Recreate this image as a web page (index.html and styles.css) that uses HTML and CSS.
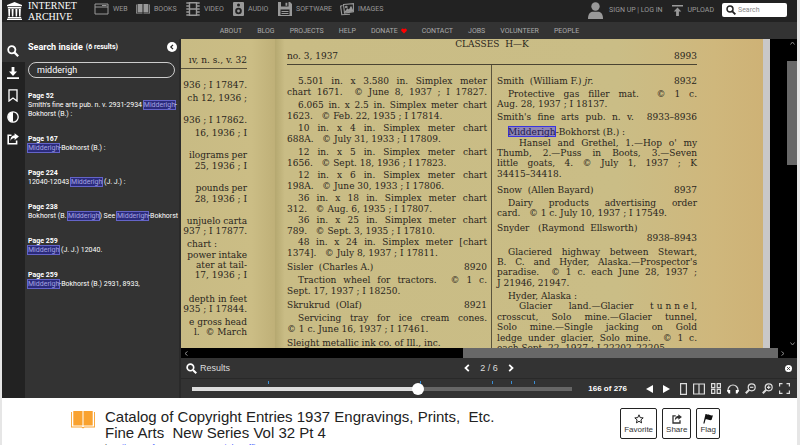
FILE: index.html
```html
<!DOCTYPE html>
<html lang="en">
<head>
<meta charset="utf-8">
<title>Catalog of Copyright Entries 1937</title>
<link rel="stylesheet" href="styles.css">
</head>
<body>
<svg class="defs" aria-hidden="true">
  <symbol id="i-search" viewBox="0 0 12 12"><circle cx="4.8" cy="4.8" r="3.6" fill="none" stroke="currentColor" stroke-width="1.8"/><path d="M7.6 7.6 11.2 11.2" stroke="currentColor" stroke-width="2.2"/></symbol>
  <symbol id="i-share" viewBox="0 0 12 12"><path d="M4.5 2.2H1.2v8.6h8.4V7.6" fill="none" stroke="currentColor" stroke-width="1.6"/><path d="M7.6.3 11.9 3.6 7.6 7V5C5.600 5 4.500 5.700 3.400 8 3.400 4.500 4.600 2.400 7.600 2.200Z" fill="currentColor"/></symbol>
</svg>
<div class="app">
  <header>
    <div class="topbar">
      <a class="logo" href="#">
        <svg width="15" height="18" viewBox="0 0 15 18" fill="#fff"><path d="M7.500 0 15 3v1.200H0V3ZM.8 5h13.400v1.400H.8ZM1.200 7h2l-.3 7.600H1.500ZM4.600 7h2l-.3 7.600H4.900ZM8.400 7h2l-.3 7.600H8.700ZM11.800 7h2l-.3 7.600h-1.400ZM.8 15h13.400v1.200H.8ZM0 16.800h15V18H0Z"/></svg>
        <span>INTERNET<br>ARCHIVE</span>
      </a>
      <nav class="media">
        <a href="#"><svg width="15" height="12" viewBox="0 0 15 12" fill="none" stroke="#999"><path d="M1 1h13v10H1ZM1 4h13M8 2.500h4.500"/></svg>WEB</a>
        <a href="#"><svg width="14" height="12" viewBox="0 0 14 12" fill="#999"><path d="M0 1.500h.8v8.300h5.700v.8H0ZM14 1.500h-.8v8.300H7.500v.8H14ZM1.600 1h4.900v8.200H1.600ZM7.500 1h4.900v8.200H7.500Z"/></svg>BOOKS</a>
        <a href="#"><svg width="14" height="14" viewBox="0 0 14 14" fill="none" stroke="#999" stroke-width="1.400"><path d="M3.500.7h7v12.600h-7ZM3.500 7h7M.3 1h2.500M.3 4h2.500M.3 7h2.500M.3 10h2.500M.3 13h2.500M11.200 1h2.500M11.200 4h2.500M11.200 7h2.500M11.200 10h2.500M11.200 13h2.500"/></svg>VIDEO</a>
        <a href="#"><svg width="11" height="14" viewBox="0 0 11 14"><rect width="11" height="14" rx="1" fill="#999"/><circle cx="5.500" cy="3" r="1.500" fill="#222"/><circle cx="5.500" cy="9" r="3.300" fill="#222"/><circle cx="5.500" cy="9" r="1.400" fill="#999"/></svg>AUDIO</a>
        <a href="#"><svg width="14" height="14" viewBox="0 0 14 14"><path d="M0 0h12l2 2v12H0Z" fill="#999"/><path d="M3 0h7.500v4.500H3ZM2.500 7.500h9V13h-9Z" fill="#222"/><path d="M7.500.8h1.800v3H7.500ZM3.500 9h7v1h-7ZM3.500 11h7v1h-7Z" fill="#999"/></svg>SOFTWARE</a>
        <a href="#"><svg width="14" height="13" viewBox="0 0 14 13" fill="none" stroke="#999" stroke-width="1.100"><path d="M2.500 2.500.6 3.200 1.800 11.700 10 11.200M3.500 1.500 13.400.7V8.700L4.500 10Z"/><circle cx="6.300" cy="4" r=".8"/><path d="m5 9 2.500-3 1.500 1.500L11 4l1.800 4Z" fill="#999"/></svg>IMAGES</a>
      </nav>
      <div class="account">
        <svg width="15" height="17" viewBox="0 0 15 17" fill="#999"><circle cx="7.500" cy="4.500" r="4.200"/><path d="M0 17c0-5 2-7.300 5-7.300h5c3 0 5 2.300 5 7.300Z"/></svg>
        <span><a href="#">SIGN UP</a> | <a href="#">LOG IN</a></span>
        <a class="upload" href="#"><svg width="11" height="11" viewBox="0 0 11 11" fill="#999"><path d="M0 0h11v1.600H0ZM5.500 2.500 9.300 6.500H6.900V11H4.100V6.500H1.700Z"/></svg>UPLOAD</a>
        <label class="find"><svg width="10" height="10"><use href="#i-search"/></svg><input type="text" placeholder="Search" aria-label="Search"></label>
      </div>
    </div>
    <nav class="links">
      <a href="#">ABOUT</a><a href="#">BLOG</a><a href="#">PROJECTS</a><a href="#">HELP</a><a href="#">DONATE<svg width="6" height="6" viewBox="0 0 7 6"><path d="M3.500 6 .5 3C-.6 1.300 1.700-1 3.500 1 5.300-1 7.600 1.300 6.500 3Z" fill="#f00"/></svg></a><a href="#">CONTACT</a><a href="#">JOBS</a><a href="#">VOLUNTEER</a><a href="#">PEOPLE</a>
    </nav>
  </header>

  <main class="reader">
    <div class="rail">
      <button class="on" aria-label="Search inside"><svg width="12" height="12"><use href="#i-search"/></svg></button>
      <button aria-label="Download"><svg width="12" height="12" viewBox="0 0 12 12" fill="#fff"><path d="M4.600 0h2.800v4.500H10L6 9 2 4.500h2.600ZM0 10.300h12V12H0Z"/></svg></button>
      <button aria-label="Bookmarks"><svg width="10" height="13" viewBox="0 0 10 13" fill="none" stroke="#fff" stroke-width="1.300"><path d="M1 .8h8v11.200L5 9 1 12Z"/></svg></button>
      <button aria-label="Visual adjustments"><svg width="12" height="12" viewBox="0 0 12 12"><circle cx="6" cy="6" r="5.200" fill="none" stroke="#fff" stroke-width="1.300"/><path d="M6 1a5 5 0 0 0 0 10Z" fill="#fff"/></svg></button>
      <button aria-label="Share"><svg width="12" height="12"><use href="#i-share"/></svg></button>
    </div>

    <aside class="panel">
      <h2>Search inside <small>(6 results)</small>
        <button aria-label="Close panel"><svg width="10" height="10" viewBox="0 0 10 10"><circle cx="5" cy="5" r="5" fill="#fff"/><path d="M6 2.800 3.800 5 6 7.200" fill="none" stroke="#222" stroke-width="1.200"/></svg></button></h2>
      <input type="text" value="midderigh" aria-label="Search inside">
      <ol>
        <li><b>Page 52</b><p>Smith's fine arts pub. n. v. 2931-2934 <mark>Midderigh</mark>-<br>Bokhorst (B.) :</p></li>
        <li><b>Page 167</b><p><mark>Midderigh</mark>-Bokhorst (B.) :</p></li>
        <li><b>Page 224</b><p>12040-12043 <mark>Midderigh</mark> (J. J.) :</p></li>
        <li><b>Page 238</b><p>Bokhorst (B. <mark>Midderigh</mark>) See <mark>Midderigh</mark>-Bokhorst (B.)</p></li>
        <li><b>Page 259</b><p><mark>Midderigh</mark> (J. J.) 12040.</p></li>
        <li><b>Page 259</b><p><mark>Midderigh</mark>-Bokhorst (B.) 2931, 8933,</p></li>
      </ol>
    </aside>

    <section class="viewer">
      <div class="scan">
        <div class="verso">
          <p class="vhead">ıv, n. s., v. 32</p>
          <p class="g5">936 ; I 17847.</p>
          <p class="g3">ch 12, 1936 ;</p>
          <p class="g12">936 ; I 17862.</p>
          <p class="g3">16, 1936 ; I</p>
          <p class="g12">ilograms per</p>
          <p class="g1">25, 1936 ; I</p>
          <p class="g12">pounds per</p>
          <p class="g1">28, 1936 ; I</p>
          <p class="g12">unjuelo carta</p>
          <p>937 ; I 17877.</p>
          <p class="g3 short">chart :</p>
          <p class="g1">power intake</p>
          <p>ater at tail-</p>
          <p>17, 1936 ; I</p>
          <p class="g14">depth in feet</p>
          <p>935 ; I 17844.</p>
          <p class="g3">e gross head</p>
          <p>l. &nbsp;© March</p>
        </div>
        <div class="recto">
          <p class="title">CLASSES &nbsp;H—K</p>
          <div class="folio"><span>no. 3, 1937</span><span>8993</span></div>
          <div class="columns">
            <div class="col">
              <p class="in full">5.501 in. x 3.580 in. Simplex meter</p>
              <p class="g1 full">chart 1671. &nbsp;© June 8, 1937 ; I 17827.</p>
              <p class="g3 in full">6.065 in. x 2.5 in. Simplex meter chart</p>
              <p class="g1">1623. &nbsp; © Feb. 22, 1935 ; I 17814.</p>
              <p class="g2 in full">10 in. x 4 in. Simplex meter chart</p>
              <p class="g1">688A. &nbsp; © July 31, 1933 ; I 17809.</p>
              <p class="g3 in full">12 in. x 5 in. Simplex meter chart</p>
              <p class="g1">1656. &nbsp; © Sept. 18, 1936 ; I 17823.</p>
              <p class="g2 in full">12 in. x 6 in. Simplex meter chart</p>
              <p class="g1">198A. &nbsp; © June 30, 1933 ; I 17806.</p>
              <p class="g2 in full">36 in. x 18 in. Simplex meter chart</p>
              <p class="g1">312. &nbsp; © Aug. 6, 1935 ; I 17807.</p>
              <p class="g1 in full">36 in. x 25 in. Simplex meter chart</p>
              <p class="g1">789. &nbsp; © Sept. 3, 1935 ; I 17810.</p>
              <p class="g1 in full">48 in. x 24 in. Simplex meter [chart</p>
              <p class="g1">1374]. &nbsp; © July 8, 1937 ; I 17811.</p>
              <p class="g4 pair"><span>Sisler &nbsp;(Charles A.)</span><span>8920</span></p>
              <p class="g3 in full">Traction wheel for tractors. &nbsp;© 1 c.</p>
              <p class="g1">Sept. 17, 1937 ; I 18250.</p>
              <p class="g4 pair"><span>Skrukrud &nbsp;(Olaf)</span><span>8921</span></p>
              <p class="g3 in full">Servicing tray for ice cream cones.</p>
              <p class="g1">© 1 c. June 16, 1937 ; I 17461.</p>
              <p class="g4">Sleight metallic ink co. of Ill., inc.</p>
            </div>
            <div class="col">
              <p class="pair"><span>Smith &nbsp;(William F.) <i>jr.</i></span><span>8932</span></p>
              <p class="g3 in full">Protective gas filler mat. &nbsp;© 1 c.</p>
              <p>Aug. 28, 1937 ; I 18137.</p>
              <p class="g3 full">Smith's fine arts pub. n. v. &nbsp;8933–8936</p>
              <p class="g5 in"><mark>Midderigh</mark>-Bokhorst (B.) :</p>
              <p class="g1 in2 full">Hansel and Grethel, 1.—Hop o' my</p>
              <p class="full">Thumb, 2.—Puss in Boots, 3.—Seven</p>
              <p class="full">little goats, 4. © July 1, 1937 ; K</p>
              <p class="g1">34415–34418.</p>
              <p class="g6 pair"><span>Snow &nbsp;(Allen Bayard)</span><span>8937</span></p>
              <p class="g3 in full">Dairy products advertising order</p>
              <p>card. &nbsp; © 1 c. July 10, 1937 ; I 17549.</p>
              <p class="g5">Snyder &nbsp; (Raymond &nbsp;Ellsworth)</p>
              <p class="end">8938–8943</p>
              <p class="g4 in full">Glaciered highway between Stewart,</p>
              <p class="full">B. C. and Hyder, Alaska.—Prospector's</p>
              <p class="full">paradise. &nbsp;© 1 c. each June 28, 1937 ;</p>
              <p class="g1">J 21946, 21947.</p>
              <p class="g3 in">Hyder, Alaska :</p>
              <p class="in2 full">Glacier land.—Glacier t&#8196;u&#8196;n&#8196;n&#8196;e&#8196;l,</p>
              <p class="g1 full">crosscut, Solo mine.—Glacier tunnel,</p>
              <p class="full">Solo mine.—Single jacking on Gold</p>
              <p class="g1 full">ledge under glacier, Solo mine. &nbsp;© 1 c.</p>
              <p>each Sept. 22, 1937 ; J 22202–22205.</p>
            </div>
          </div>
        </div>
        <div class="edge"></div>
        <div class="vbar"><svg width="5" height="4" viewBox="0 0 5 4"><path d="M.5 3.500 2.500 1l2 2.500"/></svg><i></i><svg width="5" height="4" viewBox="0 0 5 4"><path d="M.5.5 2.500 3l2-2.500"/></svg></div>
      </div>
      <div class="hbar"><svg width="4" height="5" viewBox="0 0 4 5"><path d="M3.500.5 1 2.500l2.500 2"/></svg><i></i><svg width="4" height="5" viewBox="0 0 4 5"><path d="M.5.5 3 2.500l-2.500 2"/></svg></div>
      <div class="results">
        <span class="rlabel"><svg width="11" height="11"><use href="#i-search"/></svg>Results</span>
        <div class="pager">
          <button aria-label="Previous result"><svg width="6" height="8" viewBox="0 0 6 8"><path d="M4.800.8 1.500 4l3.300 3.200" fill="none" stroke="#fff" stroke-width="1.800"/></svg></button>
          <span>2 / 6</span>
          <button aria-label="Next result"><svg width="6" height="8" viewBox="0 0 6 8"><path d="M1.200.8 4.500 4 1.200 7.200" fill="none" stroke="#fff" stroke-width="1.800"/></svg></button>
        </div>
        <button class="clear" aria-label="Clear results"><svg width="7" height="7" viewBox="0 0 7 7"><circle cx="3.500" cy="3.500" r="3.500" fill="#fff"/><path d="m2.200 2.200 2.600 2.600m0-2.600L2.200 4.800" stroke="#333"/></svg></button>
      </div>
      <div class="controls">
        <div class="track">
          <i class="hit" style="left:20%"></i><i class="hit" style="left:60%"></i><i class="hit" style="left:79%"></i><i class="hit" style="left:84%"></i><i class="hit" style="left:90%"></i>
          <input type="range" min="1" max="276" value="165" aria-label="Page">
        </div>
        <b>166 of 276</b>
        <div class="tools">
          <button aria-label="Previous page"><svg width="7" height="8" viewBox="0 0 7 8"><path class="solid" d="M7 0v8L0 4Z"/></svg></button>
          <button aria-label="Next page"><svg width="7" height="8" viewBox="0 0 7 8"><path class="solid" d="M0 0v8l7-4Z"/></svg></button>
          <button aria-label="One page"><svg width="7" height="12" viewBox="0 0 7 12"><path d="M.6.6h5.800v10.800H.6Z"/></svg></button>
          <button aria-label="Two pages"><svg width="12" height="12" viewBox="0 0 12 12"><path d="M.6 1h10.800v10H.6ZM6 1v10"/></svg></button>
          <button aria-label="Thumbnails"><svg width="10" height="11" viewBox="0 0 10 11"><path d="M.6.6h3.200v4H.6ZM6.200.6h3.200v4H6.200ZM.6 6.400h3.200v4H.6ZM6.200 6.400h3.200v4H6.200Z"/></svg></button>
          <button aria-label="Read aloud"><svg width="12" height="10" viewBox="0 0 12 10"><path d="M1 8V6a5 5 0 0 1 10 0v2"/><path class="solid" d="M0 6h3.200v3.500H1.500ZM12 6H8.800v3.500h1.700Z"/></svg></button>
          <button aria-label="Zoom out"><svg width="11" height="11" viewBox="0 0 11 11"><circle cx="6.700" cy="4.300" r="3.500"/><path d="M4.200 6.800.8 10.200" stroke-width="2"/><path d="M5 4.300h3.400"/></svg></button>
          <button aria-label="Zoom in"><svg width="11" height="11" viewBox="0 0 11 11"><circle cx="6.700" cy="4.300" r="3.500"/><path d="M4.200 6.800.8 10.200" stroke-width="2"/><path d="M5 4.300h3.400M6.700 2.600V6"/></svg></button>
          <button aria-label="Full screen"><svg width="11" height="11" viewBox="0 0 11 11"><path d="M.6 3.500V.6h2.900M7.500.6h2.900v2.900M10.400 7.500v2.900H7.500M3.500 10.400H.6V7.500"/></svg></button>
        </div>
      </div>
    </section>
  </main>

  <section class="about">
    <svg class="book" width="24" height="18" viewBox="0 0 24 18" fill="#f9a22f"><path d="M2.300 0h9.200v14.500H2.300ZM12.500 0h9.200v14.500h-9.200ZM0 1h.9v14.600h9.900l1.200.6 1.200-.6h9.900V1h.9v15.500H13.500L12 17.500l-1.500-1H0Z"/></svg>
    <div class="heading">
      <h1>Catalog of Copyright Entries 1937 Engravings, Prints,&nbsp; Etc.<br>Fine Arts&nbsp; New Series Vol 32 Pt 4</h1>
      <p>by <a href="#">Library of Congress. Copyright Office</a></p>
    </div>
    <div class="actions">
      <button><svg width="10" height="10" viewBox="0 0 10 10"><path d="m5 .8 1.200 2.800 3 .3-2.300 2 .7 3L5 7.300 2.400 8.900l.7-3-2.300-2 3-.3Z" fill="none" stroke="#222"/></svg>Favorite</button>
      <button><svg width="10" height="10"><use href="#i-share"/></svg>Share</button>
      <button><svg width="10" height="10" viewBox="0 0 10 10"><path d="M2.500 0 .3 9.500h1.200l1-4c2-1 3.500 1.200 6 .5L10 1.200C7.500 2 6 0 3.700.8L3.800 0Z" fill="#111"/></svg>Flag</button>
    </div>
  </section>
</div>
</body>
</html>
```
FILE: styles.css
```css
* { box-sizing: border-box; }
html, body { height: 100%; }
body {
  margin: 0;
  padding: 0 3px 0 2px;
  background: #e6e6e6;
  font-family: "Liberation Sans", Arial, sans-serif;
  overflow: hidden;
}
p, h1, h2, ol { margin: 0; padding: 0; list-style: none; font-weight: normal; }
a { color: inherit; text-decoration: none; }
button { border: 0; padding: 0; background: none; color: inherit; font: inherit; display: flex; }
svg { flex: none; display: block; }
.defs { position: absolute; width: 0; height: 0; }
.app { background: #fff; min-height: 100%; }

/* header */
.topbar {
  display: flex;
  align-items: center;
  height: 22px;
  padding: 0 10px 0 5px;
  background: #222;
  color: #999;
  font-family: Roboto, sans-serif;
  font-size: 7px;
}
.logo { display: flex; align-items: center; gap: 6px; width: 87px; color: #fff; font: 10px/11px "Liberation Serif", serif; }
.media { display: grid; grid-template-columns: 42px 50px 47px 45px 62px 50px; padding-bottom: 4px; }
.media a { display: flex; align-items: center; gap: 4px; height: 14px; }
.account { display: flex; align-items: center; gap: 6px; margin-left: auto; padding-bottom: 2px; }
.upload { display: flex; align-items: center; gap: 5px; margin-left: 3px; }
.find { display: flex; align-items: center; gap: 2px; width: 65px; height: 14px; margin-left: 2px; padding: 0 4px; background: #fff; border-radius: 2px; color: #222; }
.find input { width: 100%; min-width: 0; border: 0; padding: 0; background: none; font: 7px Roboto, sans-serif; outline: 0; }
.find input::placeholder { color: #888; }
.links {
  display: flex;
  justify-content: center;
  align-items: center;
  gap: 15px;
  height: 17px;
  background: #333;
  color: #aaa;
  font: 7px Roboto, sans-serif;
}
.links a { display: flex; align-items: center; gap: 3px; }

/* reader */
.reader { display: flex; background: #333; color: #fff; }
.rail { width: 23px; background: #222; display: flex; flex-direction: column; }
.rail button { height: 22px; align-items: center; justify-content: center; padding-right: 2px; }
.rail .on { background: #333; height: 23px; }
.panel { width: 154px; padding: 3px 2px 0 3px; font-family: Roboto, sans-serif; }
.panel h2 { display: flex; align-items: center; gap: 3px; font-size: 9px; font-weight: bold; line-height: 10px; }
.panel small { font-size: 7px; }
.panel h2 button { margin-left: auto; }
.panel > input { display: block; width: 147px; height: 16px; margin: 10px 0 14px; padding: 0 8px; border: 1px solid #ccc; border-radius: 8px; background: none; color: #fff; font: 9px Roboto, sans-serif; }
.panel ol { font-size: 7px; line-height: 9px; white-space: nowrap; }
.panel li { margin-bottom: 16px; }
.panel b { display: block; }
mark { background: #2b2b7c; color: #a3a3e0; box-shadow: 0 0 0 1px #6464c8; }
.viewer { flex: 1; min-width: 0; border-left: 2px solid #2a2a2a; }

/* scanned pages */
.scan {
  display: flex;
  height: 309px;
  overflow: hidden;
  background: #000;
  color: #29251c;
  font: 10px/10px "DejaVu Serif Condensed", "DejaVu Serif", serif;
  white-space: nowrap;
}
.verso { flex: none; width: 94px; padding: 16px 28px 0 0; overflow: hidden; background: linear-gradient(90deg, #c8bb84, #cbbd85 75%, #bfb078); }
.verso p { display: flex; justify-content: flex-end; }
.verso .vhead { height: 14px; border-bottom: 1px solid #5b543d; }
.verso .vhead + p { margin-top: 11px; }
.verso .short { padding-right: 30px; }
.recto { flex: 1; padding: 0 66px 0 12px; background: linear-gradient(90deg, #b5a870, #c9bc85 2%, #cabd86 70%, #cfb77c 90%, #ceb276); }
.title { text-align: center; }
.folio { display: flex; justify-content: space-between; margin-top: 2px; height: 14px; line-height: 10px; border-bottom: 1px solid #4a4432; }
.columns { display: grid; grid-template-columns: 1fr 1fr; }
.col { padding-top: 11px; }
.col:first-child { padding-right: 4px; border-right: 1px solid #5b543d; }
.col:last-child { padding-left: 5px; }
.full { text-align-last: justify; }
.in { padding-left: 11px; }
.in2 { padding-left: 22px; }
.end { text-align: right; }
.pair { display: flex; justify-content: space-between; }
.g1 { margin-top: 1px; }
.g2 { margin-top: 2px; }
.g3 { margin-top: 3px; }
.g4 { margin-top: 4px; }
.g5 { margin-top: 5px; }
.g6 { margin-top: 6px; }
.g12 { margin-top: 12px; }
.g14 { margin-top: 14px; }
.scan mark { background: #9086b4; color: #1c1850; box-shadow: inset 0 0 0 1px #3a34e0; }
.edge { width: 7px; background: #c9c8c8; }
.vbar, .hbar { display: flex; align-items: center; justify-content: space-between; background: #000; }
.vbar { flex-direction: column; width: 27px; padding: 2px 0 2px 17px; background: #000; }
.vbar i { width: 10px; height: 104px; margin: 16px 0 auto; background: #686868; }
.vbar svg, .hbar svg { fill: none; stroke: #888; }
.hbar { height: 10px; padding: 0 12px 0 3px; }
.hbar i { width: 315px; height: 10px; margin: 0 3px 0 auto; background: #686868; }

/* results and page controls */
.results { display: grid; grid-template-columns: 1fr auto 1fr; align-items: center; height: 21px; padding: 0 5px; border-bottom: 1px solid #292929; font-size: 9px; color: #ddd; }
.rlabel, .pager { display: flex; align-items: center; gap: 3px; }
.rlabel svg { color: #fff; }
.pager { gap: 10px; }
.clear { justify-self: end; }
.controls { display: flex; align-items: center; height: 19px; padding: 0 7px 0 11px; }
.controls b { margin: 0 19px 0 16px; font: bold 8px "Liberation Sans", sans-serif; white-space: nowrap; }
.track { position: relative; flex: 1; display: flex; }
.track input { appearance: none; width: 100%; height: 12px; margin: 0; background: linear-gradient(90deg, #ddd 59%, #666 59%) center / 100% 4px no-repeat; border-radius: 2px; }
.track input::-webkit-slider-thumb { appearance: none; width: 12px; height: 12px; border-radius: 6px; background: #fff; }
.hit { position: absolute; top: -2px; width: 1px; height: 3px; background: #3b8fd5; }
.tools { display: flex; align-items: center; gap: 6px; }
.tools svg { fill: none; stroke: #ddd; stroke-width: 1.2; }
.tools .solid { fill: #fff; stroke: none; }
.tools button:nth-child(-n+2) { margin-right: 4px; }

/* item heading */
.about { display: flex; align-items: flex-start; padding: 10px 77px 0 69px; }
.book { margin: 3px 10px 0 0; }
.heading { white-space: nowrap; color: #222; padding-top: 1px; }
.heading h1 { font-size: 15px; line-height: 16px; }
.heading p { margin-top: 1px; font-size: 9px; line-height: 12px; color: #555; }
.heading a { color: #4b64ff; }
.actions { display: flex; gap: 5px; margin-left: auto; }
.actions button { flex-direction: column; align-items: center; justify-content: space-between; height: 31px; padding: 5px 3px 4px; border: 1px solid #222; border-radius: 2px; color: #333; font-size: 8px; line-height: 9px; }
```
